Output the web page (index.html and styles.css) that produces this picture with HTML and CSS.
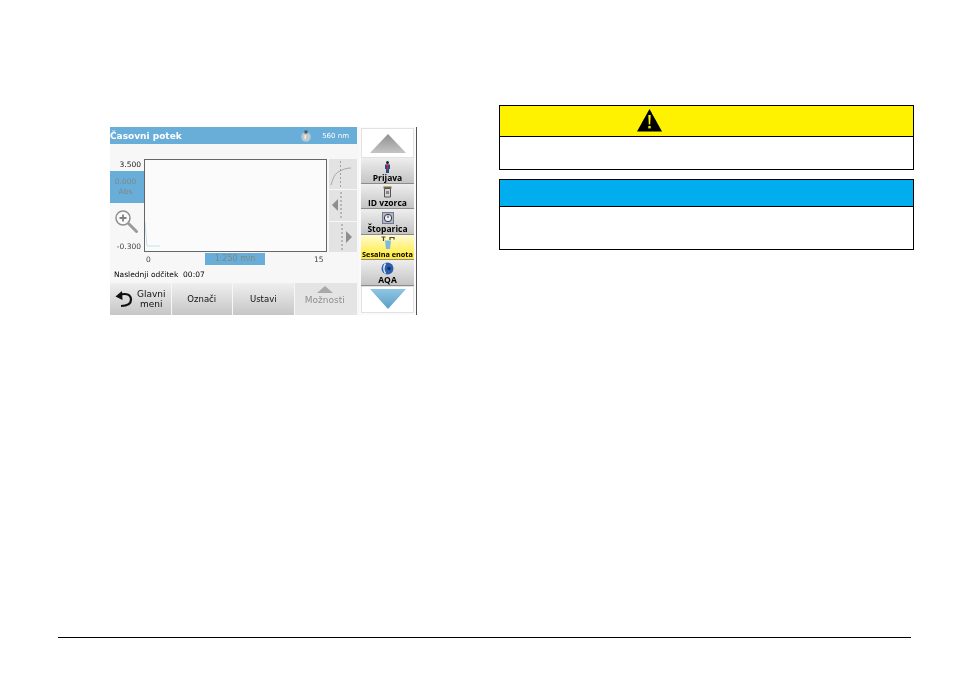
FILE: index.html
```html
<!DOCTYPE html>
<html lang="sl">
<head>
  <meta charset="UTF-8" />
  <title>Časovni potek</title>
  <link rel="stylesheet" href="styles.css">
</head>
<body>
  <div class="page">
    <div class="content">
      <div class="device">
        <div class="screen">
          <div class="title-bar">
            <span class="title">Časovni potek</span>
            <span class="wave">
              <svg class="lamp" width="10" height="12" viewBox="0 0 10 12"><circle cx="5" cy="7" r="4.800" fill="#a9cbe2"/><rect x="3.500" y="0.500" width="3" height="3" fill="#555"/><path d="M2.500 4h5l1 3a3.500 3.500 0 0 1-7 0z" fill="#c9c9c2"/><path d="M3.500 5h1.500v4h-1.500z" fill="#eee"/></svg>
              560 nm
            </span>
          </div>
          <div class="chart">
            <div class="axis">
              <div class="axis-top">3.500</div>
              <div class="reading">0.000<br>Abs</div>
              <svg class="zoom-icon" width="26" height="26" viewBox="0 0 26 26">
                <circle cx="9" cy="9" r="7" fill="#fafafa" stroke="#8f8f8f" stroke-width="1.500"/>
                <path d="M5.500 9h7M9 5.500v7" stroke="#808080" stroke-width="1.800"/>
                <path d="M14.500 14.500l8 8" stroke="#9a9a9a" stroke-width="3" stroke-linecap="round"/>
              </svg>
              <div class="axis-bottom">-0.300</div>
            </div>
            <div class="plot">
              <svg class="trace" width="181" height="91" viewBox="0 0 181 91">
                <polyline points="0,62 2,86 15,86" fill="none" stroke="#c4e0f0" stroke-width="1"/>
              </svg>
            </div>
            <div class="side-tools">
              <div class="tool">
                <svg width="28" height="30" viewBox="0 0 28 30"><path d="M11.500 2v27" stroke="#a0a0a0" stroke-dasharray="2 2"/><path d="M2 26c2-7 4-12 9-14 4-2 7-3 11-3" fill="none" stroke="#999" stroke-width="0.800"/></svg>
              </div>
              <div class="tool">
                <svg width="28" height="30" viewBox="0 0 28 30"><path d="M12 2v27" stroke="#a8a8a8" stroke-width="1.500" stroke-dasharray="2 2"/><path d="M3 15l6-6v12z" fill="#8e8e8e"/></svg>
              </div>
              <div class="tool">
                <svg width="28" height="30" viewBox="0 0 28 30"><path d="M13 2v27" stroke="#a8a8a8" stroke-width="1.500" stroke-dasharray="2 2"/><path d="M23 15l-6-6v12z" fill="#8e8e8e"/></svg>
              </div>
            </div>
          </div>
          <div class="x-axis">
            <span class="x-start">0</span>
            <span class="x-time">1.250 min</span>
            <span class="x-end">15</span>
          </div>
          <div class="next-reading">Naslednji odčitek&nbsp; 00:07</div>
          <div class="buttons">
            <div class="btn btn-back">
              <svg width="18" height="18" viewBox="0 0 18 18"><path d="M5 5c3-1.500 11-2 11 4.500 0 5-5 6.500-10 6.500" fill="none" stroke="#111" stroke-width="2.200"/><path d="M0.500 6.500L7 1l0.500 9z" fill="#111"/></svg>
              <span>Glavni<br>meni</span>
            </div>
            <div class="btn">Označi</div>
            <div class="btn">Ustavi</div>
            <div class="btn btn-off">
              <svg width="16" height="7" viewBox="0 0 16 7"><path d="M8 0l8 7H0z" fill="#a8a8a8"/></svg>
              Možnosti
            </div>
          </div>
        </div>
        <div class="softkeys">
          <div class="arrow-key">
            <svg width="36" height="19" viewBox="0 0 36 19"><defs><linearGradient id="up" x1="0" y1="0" x2="0" y2="1"><stop offset="0" stop-color="#8f8f8f"/><stop offset="1" stop-color="#c4c4c4"/></linearGradient></defs><path d="M18 0l18 19H0z" fill="url(#up)"/></svg>
          </div>
          <div class="key">
            <svg width="7" height="12" viewBox="0 0 7 12"><circle cx="3.500" cy="1.600" r="1.500" fill="#223"/><path d="M1 3.500h5v4.500H5v4H2V8H1z" fill="#1c4f8f"/><rect x="2.500" y="3.500" width="2" height="5" fill="#c8202c"/></svg>
            <span>Prijava</span>
          </div>
          <div class="key">
            <svg width="9" height="12" viewBox="0 0 9 12"><rect x="0.500" y="0.500" width="8" height="2" fill="#7a6a3a"/><path d="M1.500 2.500h6v8.500h-6z" fill="#d4d4d4" stroke="#555"/><rect x="3" y="5" width="3" height="3" fill="#888"/></svg>
            <span>ID vzorca</span>
          </div>
          <div class="key">
            <svg width="12" height="12" viewBox="0 0 12 12"><rect x="0.500" y="0.500" width="11" height="11" fill="#a9bace" stroke="#778"/><circle cx="6" cy="6" r="3.700" fill="#eee" stroke="#334"/><path d="M6 3.500V6" stroke="#334"/></svg>
            <span>Štoparica</span>
          </div>
          <div class="key key-active">
            <svg width="14" height="13" viewBox="0 0 14 13"><path d="M0.500 1h4M2.500 1v4M9 4V1.500h4v2" fill="none" stroke="#444" stroke-width="1.200"/><path d="M4 4.500h6l-1 8.500H5z" fill="#7fb9dc"/></svg>
            <span>Sesalna enota</span>
          </div>
          <div class="key">
            <svg width="13" height="13" viewBox="0 0 13 13"><circle cx="6.500" cy="6.500" r="6" fill="#2a5fb0"/><path d="M4.500 1.500c-2 3-2 7 0 10" fill="none" stroke="#dfe9f5" stroke-width="1.500"/><circle cx="8" cy="6.500" r="1.800" fill="#12306a"/></svg>
            <span>AQA</span>
          </div>
          <div class="arrow-key arrow-down">
            <svg width="36" height="20" viewBox="0 0 36 20"><defs><linearGradient id="down" x1="0" y1="0" x2="0" y2="1"><stop offset="0" stop-color="#8fc6e4"/><stop offset="1" stop-color="#5a9fc6"/></linearGradient></defs><path d="M0 0h36L18 20z" fill="url(#down)"/></svg>
          </div>
        </div>
      </div>
      <div class="notices">
        <div class="notice">
          <div class="notice-head head-warning">
            <svg class="warning-icon" width="25" height="23" viewBox="0 0 25 23"><path d="M12.500 0L25 22.500H0z" fill="#000"/><path d="M11.300 6h2.400l-.5 9.500h-1.400z" fill="#fff200"/><rect x="11.300" y="17" width="2.400" height="2.400" fill="#fff200"/></svg>
          </div>
          <div class="notice-body body-warning"></div>
        </div>
        <div class="notice">
          <div class="notice-head head-info"></div>
          <div class="notice-body body-info"></div>
        </div>
      </div>
    </div>
    <div class="footer-line"></div>
  </div>
</body>
</html>
```

FILE: styles.css
```css
body {
  margin: 0;
  background: #fff;
  font-family: "DejaVu Sans", sans-serif;
}

.page {
  width: 954px;
  height: 673px;
  position: relative;
  overflow: hidden;
}

.content {
  display: flex;
  align-items: flex-start;
  padding: 105px 40px 0 110px;
}

/* instrument screenshot */
.device {
  display: flex;
  width: 307px;
  height: 188px;
  margin-top: 22px;
  flex-shrink: 0;
  background: #f7f7f7;
  filter: blur(0.35px);
}

.screen {
  width: 247px;
  display: flex;
  flex-direction: column;
}

.title-bar {
  height: 17px;
  background: #69aed9;
  color: #fff;
  display: flex;
  justify-content: space-between;
  align-items: center;
  padding: 0 8px 0 0;
}

.title {
  font-size: 9px;
  font-weight: bold;
}

.wave {
  display: flex;
  align-items: center;
  gap: 11px;
  font-size: 7px;
}

.chart {
  height: 109px;
  display: flex;
  padding-top: 15px;
  box-sizing: border-box;
}

.axis {
  width: 34px;
  height: 94px;
  display: flex;
  flex-direction: column;
}

.axis-top,
.axis-bottom {
  font-size: 7.500px;
  color: #222;
  text-align: right;
  padding-right: 3px;
}

.axis-top {
  height: 12px;
  line-height: 11px;
}

.reading {
  height: 32px;
  background: #69aed9;
  color: #7d8886;
  font-size: 7.500px;
  line-height: 10px;
  text-align: center;
  padding-top: 6px;
  box-sizing: border-box;
  padding-right: 3px;
}

.zoom-icon {
  margin: 6px 0 0 4px;
}

.axis-bottom {
  margin-top: 7px;
  color: #444;
}

.plot {
  width: 183px;
  height: 93px;
  box-sizing: border-box;
  background: #fbfbfb;
  border: 1px solid #666;
}

.trace {
  display: block;
}

.side-tools {
  width: 28px;
  margin-left: 2px;
  display: flex;
  flex-direction: column;
  gap: 1px;
  height: 93px;
}

.tool {
  flex: 1;
  background: #e3e3e3;
  display: flex;
  align-items: center;
  justify-content: center;
}

.x-axis {
  height: 12px;
  display: flex;
  align-items: center;
  font-size: 7.500px;
  color: #444;
}

.x-start {
  margin-left: 36px;
  width: 59px;
}

.x-time {
  width: 60px;
  height: 12px;
  line-height: 12px;
  background: #69aed9;
  color: #7d8886;
  font-size: 8px;
  text-align: center;
}

.x-end {
  margin-left: 49px;
}

.next-reading {
  height: 18px;
  line-height: 19px;
  font-size: 7.500px;
  color: #000;
  padding-left: 4px;
}

.buttons {
  flex: 1;
  display: flex;
  gap: 1px;
}

.btn {
  flex: 1;
  background: linear-gradient(#efefef, #c6c6c6);
  display: flex;
  align-items: center;
  justify-content: center;
  font-size: 8.500px;
  color: #111;
}

.btn-back {
  gap: 4px;
  text-align: center;
  font-size: 9px;
  line-height: 10.500px;
}

.btn-off {
  flex-direction: column;
  background: #e4e4e4;
  color: #8f8f8f;
  font-size: 9px;
  gap: 2px;
  padding: 0 2px 7px 0;
}

/* right hand key strip */
.softkeys {
  width: 58px;
  margin-left: 2px;
  padding: 1px 2px;
  box-sizing: border-box;
  border-right: 1px solid #555;
  background: #fafafa;
  display: flex;
  flex-direction: column;
}

.arrow-key {
  height: 30px;
  display: flex;
  align-items: center;
  justify-content: center;
  border: 1px solid #e2e2e2;
  box-sizing: border-box;
  background: #fff;
}

.arrow-down {
  height: 27px;
  align-items: flex-start;
  padding-top: 2px;
}

.key {
  height: 25.600px;
  display: flex;
  flex-direction: column;
  align-items: center;
  justify-content: flex-end;
  box-sizing: border-box;
  background: linear-gradient(#eeeeee, #c4c4c4);
  border-bottom: 1px solid #8c8c8c;
  font-family: "Open Sans", sans-serif;
  font-size: 8.500px;
  font-weight: bold;
  color: #000;
  line-height: 10px;
  white-space: nowrap;
}

.key svg {
  flex-shrink: 0;
}

.key-active {
  background: linear-gradient(#fffbd0, #ffe92e);
  font-size: 7.300px;
}

/* warning boxes */
.notices {
  width: 415px;
  margin-left: 82px;
  flex-shrink: 0;
  display: flex;
  flex-direction: column;
  gap: 9px;
}

.notice {
  border: 1px solid #000;
  border-width: 1px 1.500px;
}

.notice-head {
  border-bottom: 1px solid #000;
  display: flex;
  align-items: center;
}

.head-warning {
  height: 30px;
  background: #fff200;
}

.warning-icon {
  margin: 0 0 2px 137px;
}

.head-info {
  height: 26px;
  background: #00aeef;
}

.notice-body {
  background: #fff;
  border-bottom: 1px solid #000;
  margin-bottom: -1px;
}

.body-warning {
  height: 32px;
}

.body-info {
  height: 42px;
}

.footer-line {
  position: absolute;
  left: 58px;
  right: 43px;
  top: 637px;
  height: 1px;
  background: #000;
}
```
